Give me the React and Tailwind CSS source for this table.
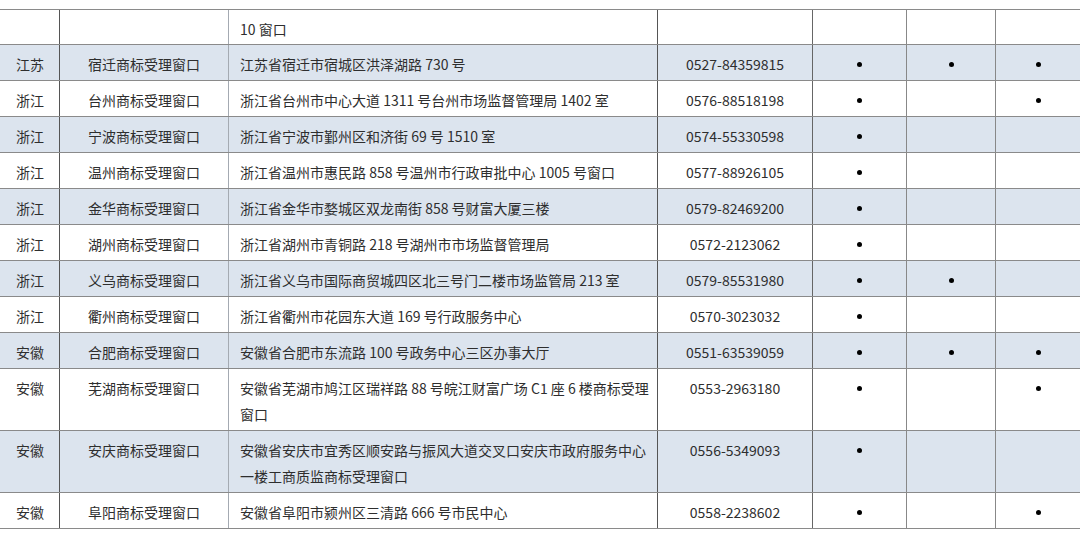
const rows = [
  { p: '', name: '', addr: ['10 窗口'], tel: '', d: [0, 0, 0], blue: false },
  { p: '江苏', name: '宿迁商标受理窗口', addr: ['江苏省宿迁市宿城区洪泽湖路 730 号'], tel: '0527-84359815', d: [1, 1, 1], blue: true },
  { p: '浙江', name: '台州商标受理窗口', addr: ['浙江省台州市中心大道 1311 号台州市场监督管理局 1402 室'], tel: '0576-88518198', d: [1, 0, 1], blue: false },
  { p: '浙江', name: '宁波商标受理窗口', addr: ['浙江省宁波市鄞州区和济街 69 号 1510 室'], tel: '0574-55330598', d: [1, 0, 0], blue: true },
  { p: '浙江', name: '温州商标受理窗口', addr: ['浙江省温州市惠民路 858 号温州市行政审批中心 1005 号窗口'], tel: '0577-88926105', d: [1, 0, 0], blue: false },
  { p: '浙江', name: '金华商标受理窗口', addr: ['浙江省金华市婺城区双龙南街 858 号财富大厦三楼'], tel: '0579-82469200', d: [1, 0, 0], blue: true },
  { p: '浙江', name: '湖州商标受理窗口', addr: ['浙江省湖州市青铜路 218 号湖州市市场监督管理局'], tel: '0572-2123062', d: [1, 0, 0], blue: false },
  { p: '浙江', name: '义乌商标受理窗口', addr: ['浙江省义乌市国际商贸城四区北三号门二楼市场监管局 213 室'], tel: '0579-85531980', d: [1, 1, 0], blue: true },
  { p: '浙江', name: '衢州商标受理窗口', addr: ['浙江省衢州市花园东大道 169 号行政服务中心'], tel: '0570-3023032', d: [1, 0, 0], blue: false },
  { p: '安徽', name: '合肥商标受理窗口', addr: ['安徽省合肥市东流路 100 号政务中心三区办事大厅'], tel: '0551-63539059', d: [1, 1, 1], blue: true },
  { p: '安徽', name: '芜湖商标受理窗口', addr: ['安徽省芜湖市鸠江区瑞祥路 88 号皖江财富广场 C1 座 6 楼商标受理', '窗口'], tel: '0553-2963180', d: [1, 0, 1], blue: false },
  { p: '安徽', name: '安庆商标受理窗口', addr: ['安徽省安庆市宜秀区顺安路与振风大道交叉口安庆市政府服务中心', '一楼工商质监商标受理窗口'], tel: '0556-5349093', d: [1, 0, 0], blue: true },
  { p: '安徽', name: '阜阳商标受理窗口', addr: ['安徽省阜阳市颍州区三清路 666 号市民中心'], tel: '0558-2238602', d: [1, 0, 1], blue: false },
];

function Dot({ on }) {
  return on ? <span className="mt-[11px] block h-[5px] w-[5px] rounded-full bg-black" /> : null;
}

export default function App() {
  return (
    <div className="min-h-screen bg-white pt-[9px] text-[14px] leading-[26px] text-[#2e2e2e]" style={{ fontFamily: '"Noto Sans CJK SC", "Noto Sans", sans-serif' }}>
      <div className="w-[1080px] border-t border-[#8a8a8a]">
        {rows.map((r, i) => (
          <div
            key={i}
            className={`grid grid-cols-[60px_169px_429px_155px_94px_89px_84px] border-b border-[#8a8a8a] ${r.addr.length > 1 ? 'h-[62px]' : i === 0 ? 'h-[35px]' : 'h-[36px]'} ${r.blue ? 'bg-[#dce4ee]' : 'bg-white'}`}
          >
            <div className="border-r border-[#555] pl-[16px] pt-[6px]">{r.p}</div>
            <div className="border-r border-[#a4aab2] pt-[6px] text-center">{r.name}</div>
            <div className="border-r border-[#555] pl-[11px] pt-[6px] whitespace-nowrap">
              {r.addr.map((l, j) => (
                <div key={j}>{l}</div>
              ))}
            </div>
            <div className="border-r border-[#666] pt-[6px] text-center">{r.tel}</div>
            <div className="flex justify-center border-r border-[#888] pt-[6px]"><Dot on={r.d[0]} /></div>
            <div className="flex justify-center border-r border-[#888] pt-[6px]"><Dot on={r.d[1]} /></div>
            <div className="flex justify-center pt-[6px]"><Dot on={r.d[2]} /></div>
          </div>
        ))}
      </div>
    </div>
  );
}
